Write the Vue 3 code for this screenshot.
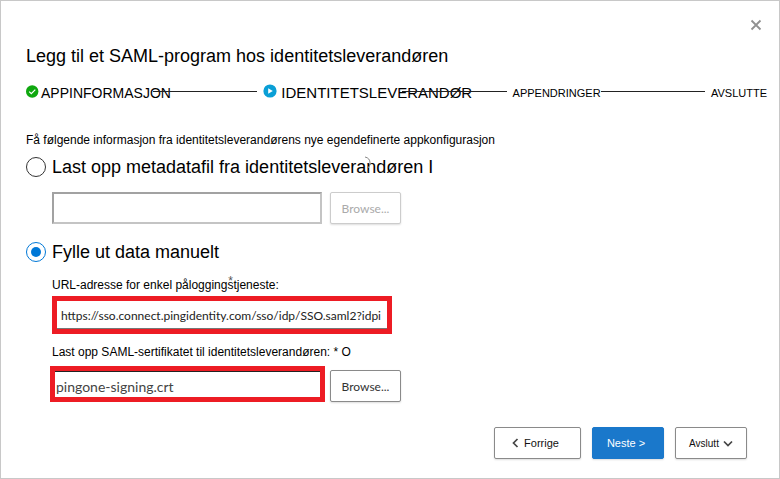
<script setup>
import { ref } from 'vue'

const source = ref('manual')
const metadataFile = ref('')
const ssoUrl = ref('https://sso.connect.pingidentity.com/sso/idp/SSO.saml2?idpi')
const certificate = ref('pingone-signing.crt')
</script>

<template>
  <main class="dialog">
    <div class="top">
      <button class="close" type="button" aria-label="Lukk">
        <svg width="12" height="12" viewBox="0 0 12 12"><path d="M1.5 1.5 10.5 10.5M10.5 1.5 1.5 10.5" stroke="#919191" stroke-width="1.8" fill="none" /></svg>
      </button>
    </div>
    <h1 class="title">Legg til et SAML-program hos identitetsleverandøren</h1>

    <ol class="steps">
      <li class="step done">
        <svg class="badge" width="13" height="13" viewBox="0 0 13 13"><circle cx="6.2" cy="6.5" r="6.2" fill="#0fa80f" /><path d="M3.2 6.6 5.3 8.7 9.3 4.7" stroke="#fff" stroke-width="1.2" fill="none" /></svg>
        <span>APPINFORMASJON</span>
      </li>
      <li class="line overlap-small" aria-hidden="true"></li>
      <li class="step current">
        <svg class="badge" width="14" height="14" viewBox="0 0 14 14"><circle cx="7" cy="7" r="6.6" fill="#0a9fd6" /><path d="M5.2 4.2 9.8 7 5.2 9.8Z" fill="#fff" /></svg>
        <span>IDENTITETSLEVERANDØR</span>
      </li>
      <li class="line overlap-large" aria-hidden="true"></li>
      <li class="step">APPENDRINGER</li>
      <li class="line" aria-hidden="true"></li>
      <li class="step">AVSLUTTE</li>
    </ol>

    <form class="form" @submit.prevent>
      <p class="intro">Få følgende informasjon fra identitetsleverandørens nye egendefinerte appkonfigurasjon</p>

      <label class="choice">
        <input v-model="source" type="radio" name="source" value="upload" />
        <span class="choice-text">Last opp metadatafil fra identitetsleverandøren I
          <svg class="arc" width="8" height="14" viewBox="0 0 8 14"><path d="M1 1Q6 2 6 7Q6 10 4 12" stroke="#888" fill="none" /></svg>
        </span>
      </label>
      <div class="row metadata">
        <input v-model="metadataFile" class="field" type="text" aria-label="Metadatafil" />
        <button class="btn browse" type="button" disabled>Browse...</button>
      </div>

      <label class="choice">
        <input v-model="source" type="radio" name="source" value="manual" />
        <span class="choice-text">Fylle ut data manuelt</span>
      </label>
      <div class="group">
        <label class="caption" for="sso">URL-adresse for enkel påloggingstjeneste:<span class="star">*</span></label>
        <input id="sso" v-model="ssoUrl" class="marked url" type="text" />
      </div>
      <div class="group">
        <label class="caption cert-caption" for="cert">Last opp SAML-sertifikatet til identitetsleverandøren: * O</label>
        <div class="row cert-row">
          <input id="cert" v-model="certificate" class="marked cert" type="text" />
          <button class="btn browse" type="button">Browse...</button>
        </div>
      </div>
    </form>

    <footer class="actions">
      <button class="btn previous" type="button">
        <svg width="7" height="10" viewBox="0 0 7 10"><path d="M5.5 1 1.5 5 5.5 9" stroke="#444" stroke-width="1.7" fill="none" /></svg>
        Forrige
      </button>
      <button class="btn next" type="button">Neste &gt;</button>
      <button class="btn finish" type="button">
        Avslutt
        <svg width="10" height="7" viewBox="0 0 10 7"><path d="M1 1.5 5 5.5 9 1.5" stroke="#444" stroke-width="1.7" fill="none" /></svg>
      </button>
    </footer>
  </main>
</template>

<style>
body {
  margin: 0;
  background: #fff;
}
</style>

<style scoped>
* {
  box-sizing: border-box;
}
.dialog {
  min-height: 100vh;
  padding: 16px 12px 19px 25px;
  border: 1px solid #c8c8c8;
  background: #fff;
  color: #000;
  font-family: "Liberation Sans", Arial, sans-serif;
  font-size: 12px;
}
.top {
  display: flex;
  justify-content: flex-end;
  height: 28px;
}
.close {
  display: flex;
  width: 16px;
  height: 16px;
  align-items: center;
  justify-content: center;
  padding: 0;
  margin-right: 3px;
  border: 0;
  background: none;
}
.title {
  margin: 0;
  font-size: 18px;
  font-weight: 400;
  line-height: 22px;
}
.steps {
  display: flex;
  align-items: center;
  height: 20px;
  margin: 15px 0 0;
  padding: 0;
  list-style: none;
}
.step {
  display: flex;
  align-items: center;
  gap: 4px;
  padding-top: 2px;
  font-size: 11px;
  line-height: 18px;
  white-space: nowrap;
}
.badge {
  margin-bottom: 4px;
}
.done {
  gap: 2px;
  font-size: 14px;
}
.current {
  font-size: 15px;
}
.line {
  flex: 1;
  height: 1px;
  margin: 0 6px 2px 0;
  background: #222;
}
.overlap-small {
  margin-left: -18px;
}
.overlap-large {
  margin-left: -70px;
}
.intro {
  margin: 30px 0 0;
  line-height: 16px;
}
.choice {
  display: flex;
  align-items: center;
  gap: 6px;
  height: 22px;
  margin-top: 8px;
  font-size: 18px;
}
.choice input {
  display: grid;
  place-content: center;
  width: 20px;
  height: 20px;
  margin: 0;
  border: 1px solid #333;
  border-radius: 50%;
  appearance: none;
}
.choice input:checked {
  border-color: #0078d7;
}
.choice input:checked::before {
  width: 10px;
  height: 10px;
  border-radius: 50%;
  background: #0078d7;
  content: "";
}
.choice-text {
  position: relative;
}
.arc {
  position: absolute;
  top: -1px;
  right: 61px;
}
.row {
  display: flex;
  gap: 8px;
}
.metadata {
  margin: 14px 0 17px 26px;
}
.field {
  width: 270px;
  height: 32px;
  border: 2px solid #c4c4c4;
  border-top-color: #a2a2a2;
  border-left-color: #a2a2a2;
}
.btn {
  display: flex;
  align-items: center;
  justify-content: center;
  height: 32px;
  padding: 0;
  border: 1px solid #8a8a8a;
  border-radius: 2px;
  background: #fff;
  box-shadow: 0 1px 2px #0002;
  color: #111;
  font-family: "Liberation Sans", Arial, sans-serif;
  font-size: 11px;
}
.browse {
  width: 71px;
  color: #333;
  font-family: Lato, "Open Sans", sans-serif;
  font-size: 12px;
}
.browse:disabled {
  border-color: #ccc;
  color: #aaa;
}
.group {
  margin-left: 26px;
}
.caption {
  position: relative;
  display: block;
  width: max-content;
  margin: 14px 0 3px;
  line-height: 16px;
}
.star {
  position: absolute;
  top: -4px;
  right: 46px;
  color: #555;
}
.marked {
  display: block;
  border: 5px solid #ed1c24;
  outline: 0;
  background: #fff;
  color: #222;
  font-family: Lato, "Open Sans", sans-serif;
}
.url {
  width: 340px;
  height: 38px;
  padding: 0 4px;
  box-shadow: inset 0 -1px #777;
  font-size: 12px;
}
.cert-caption {
  margin: 10px 0 6px;
}
.cert-row {
  align-items: flex-end;
  gap: 5px;
  margin-left: -2px;
}
.cert {
  width: 275px;
  height: 36px;
  padding: 4px 0 0 1px;
  box-shadow: inset 0 1px #222;
  color: #444;
  font-size: 14px;
}
.actions {
  display: flex;
  justify-content: flex-end;
  gap: 11px;
  margin: 25px 20px 0 0;
}
.previous {
  width: 87px;
  gap: 5px;
  padding-right: 4px;
}
.next {
  width: 72px;
  padding-right: 4px;
  border-color: #1a78cb;
  background: #1a78cb;
  color: #fff;
}
.finish {
  width: 72px;
  gap: 4px;
  font-size: 10px;
}
</style>
